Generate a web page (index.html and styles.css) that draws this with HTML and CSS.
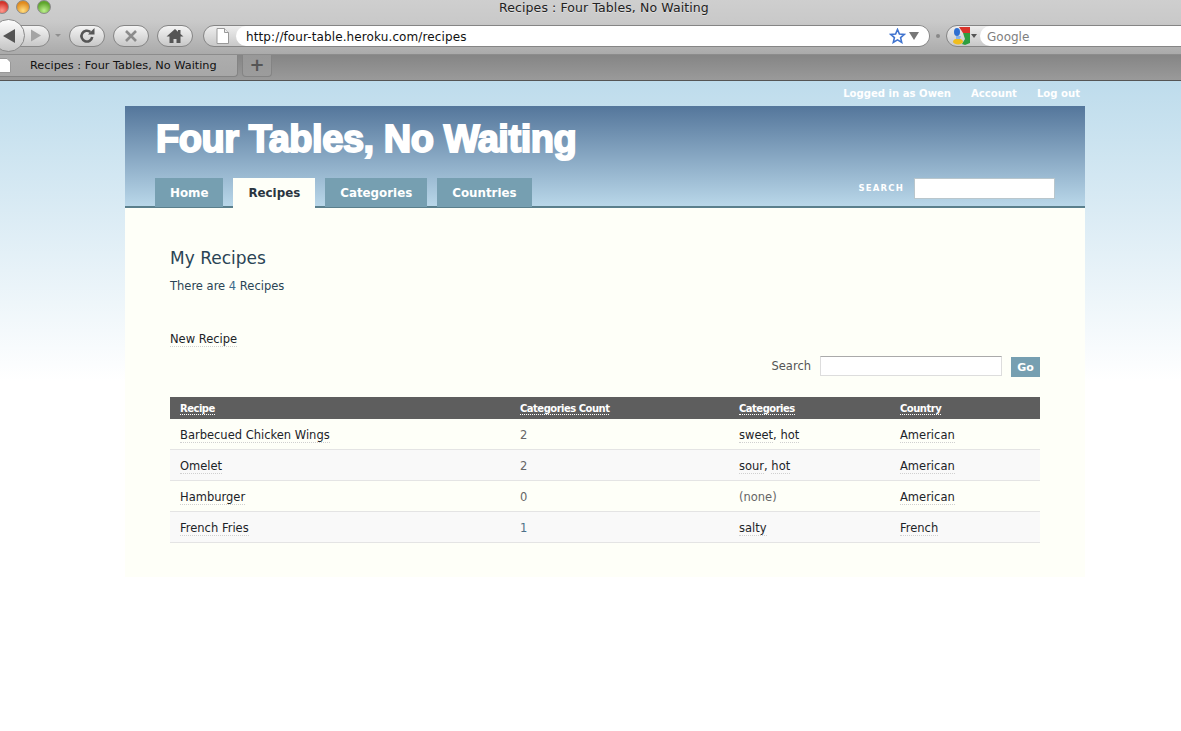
FILE: index.html
```html
<!DOCTYPE html>
<html lang="en">

<head>
  <meta charset="UTF-8">
  <title>Recipes : Four Tables, No Waiting</title>
  <link rel="stylesheet" href="styles.css">
</head>

<body>
  <div class="chrome">
    <div class="titlebar">
      <div class="lights">
        <span class="light red"></span>
        <span class="light amber"></span>
        <span class="light green"></span>
      </div>
      <div class="window-title">Recipes : Four Tables, No Waiting</div>
    </div>

    <div class="toolbar">
      <div class="history">
        <button class="back" type="button">
          <svg width="14" height="16" viewBox="0 0 14 16"><path d="M1 8 13 1v14z" fill="#555"/></svg>
        </button>
        <button class="forward" type="button">
          <svg width="11" height="13" viewBox="0 0 11 13"><path d="M11 6.500 1 .5v12z" fill="#a4a4a4"/></svg>
        </button>
      </div>
      <span class="small-arrow"></span>
      <button class="tool-btn" type="button">
        <svg width="18" height="18" viewBox="0 0 18 18"><path d="M14.200 10a5.400 5.400 0 1 1-1.800-5" fill="none" stroke="#555" stroke-width="2.600"/><path d="M10 7.500h6.500V1z" fill="#555"/></svg>
      </button>
      <button class="tool-btn" type="button">
        <svg width="14" height="14" viewBox="0 0 14 14"><path d="M2 2l10 10M12 2 2 12" stroke="#8b8b8b" stroke-width="2.600"/></svg>
      </button>
      <button class="tool-btn" type="button">
        <svg width="18" height="16" viewBox="0 0 18 16"><path d="M9 1 0.500 8.500H3.500V15h4v-4h3v4h4V8.500h3l-3-2.600V2h-2.500v1.800z" fill="#555"/></svg>
      </button>
      <div class="url-bar">
        <span class="url-icon">
          <svg width="13" height="16" viewBox="0 0 13 16"><path d="M1 .5h7.500L12.500 4.500V15.500H1z" fill="#fff" stroke="#999"/><path d="M8.500 .5v4h4" fill="#eee" stroke="#999"/></svg>
        </span>
        <div class="url-field">
          <span class="url-text">http://four-table.heroku.com/recipes</span>
          <svg class="star" width="17" height="16" viewBox="0 0 17 16"><path d="M8.500 1.500 10.400 6l4.900.4-3.700 3.200 1.100 4.800-4.200-2.500-4.200 2.500 1.100-4.800L1.700 6.400 6.600 6z" fill="#fff" stroke="#3f73cf" stroke-width="1.600"/></svg>
          <span class="url-arrow"></span>
        </div>
      </div>
      <span class="grip"></span>
      <div class="search-bar">
        <span class="engine">
          <svg width="17" height="18" viewBox="0 0 17 18"><path d="M6 0h11v6H10z" fill="#d9342b"/><path d="M10 6h7v10l-5 2-3-1 3-5z" fill="#2e9e3f"/><ellipse cx="4" cy="5" rx="3" ry="4" fill="#2f6fd0"/><ellipse cx="5" cy="14.500" rx="5" ry="3" fill="#f0bd1d"/><path d="M3 9h5l-1 3H3z" fill="#8ab4e8"/></svg>
          <span class="engine-arrow"></span>
        </span>
        <div class="search-field">Google</div>
      </div>
    </div>

    <div class="tabbar">
      <div class="tab">
        <svg width="12" height="15" viewBox="0 0 12 15"><path d="M0 .5h8L11.500 4v10.500H0z" fill="#fff" stroke="#999"/></svg>
        <span>Recipes : Four Tables, No Waiting</span>
      </div>
      <div class="new-tab">+</div>
    </div>
  </div>

  <div class="viewport">
    <div class="wrapper">
      <ul class="userbar">
        <li><a href="#">Logged in as Owen</a></li>
        <li><a href="#">Account</a></li>
        <li><a href="#">Log out</a></li>
      </ul>

      <div class="header">
        <h1>Four Tables, No Waiting</h1>
        <div class="header-row">
          <ul class="nav">
            <li><a href="#">Home</a></li>
            <li class="active"><a href="#">Recipes</a></li>
            <li><a href="#">Categories</a></li>
            <li><a href="#">Countries</a></li>
          </ul>
          <form class="site-search">
            <label for="site-q">SEARCH</label>
            <input type="text" id="site-q">
          </form>
        </div>
      </div>

      <div class="content">
        <h2>My Recipes</h2>
        <p class="count">There are <span class="number">4</span> Recipes</p>
        <p class="new-link"><a href="#">New Recipe</a></p>

        <form class="table-search">
          <label for="q">Search</label>
          <input type="text" id="q">
          <button type="button">Go</button>
        </form>

        <table class="recipes">
          <thead>
            <tr>
              <th class="col-name"><a href="#">Recipe</a></th>
              <th class="col-count"><a href="#">Categories Count</a></th>
              <th class="col-cats"><a href="#">Categories</a></th>
              <th><a href="#">Country</a></th>
            </tr>
          </thead>
          <tbody>
            <tr>
              <td><a href="#">Barbecued Chicken Wings</a></td>
              <td class="muted">2</td>
              <td><a href="#">sweet</a>, <a href="#">hot</a></td>
              <td><a href="#">American</a></td>
            </tr>
            <tr class="alt">
              <td><a href="#">Omelet</a></td>
              <td class="muted">2</td>
              <td><a href="#">sour</a>, <a href="#">hot</a></td>
              <td><a href="#">American</a></td>
            </tr>
            <tr>
              <td><a href="#">Hamburger</a></td>
              <td class="muted">0</td>
              <td class="muted">(none)</td>
              <td><a href="#">American</a></td>
            </tr>
            <tr class="alt">
              <td><a href="#">French Fries</a></td>
              <td class="blue">1</td>
              <td><a href="#">salty</a></td>
              <td><a href="#">French</a></td>
            </tr>
          </tbody>
        </table>
      </div>
    </div>
  </div>
</body>
</html>
```

FILE: styles.css
```css
/* Browser window */

html, body {
  margin: 0;
  height: 100%;
  overflow: hidden;
  background-color: #fff;
}

body {
  font-family: "DejaVu Sans", "Liberation Sans", sans-serif;
  font-size: 11.500px;
}

ul {
  margin: 0;
  padding: 0;
  list-style: none;
}

a {
  color: inherit;
  text-decoration: none;
}

.chrome {
  height: 81px;
  box-sizing: border-box;
  border-bottom: 1px solid #555;
  overflow: hidden;
}

.titlebar {
  display: flex;
  align-items: center;
  height: 22px;
  margin-top: -5px;
  padding-top: 5px;
  background: linear-gradient(#d0d0d0, #c9c9c9);
}

.lights {
  display: flex;
  gap: 7px;
  width: 604px;
  margin-left: -5px;
  margin-top: -9px;
}

.light {
  width: 14px;
  height: 14px;
  border-radius: 50%;
  border: 1px solid #8a8a8a;
  box-sizing: border-box;
}

.red { background: radial-gradient(circle at 50% 80%, #ff9a8e, #d3332b 70%); }
.amber { background: radial-gradient(circle at 50% 80%, #ffdf80, #e08a1e 70%); }
.green { background: radial-gradient(circle at 50% 80%, #bdf08e, #5ea52c 70%); }

.window-title {
  margin-left: -100px;
  margin-top: -7px;
  font-size: 12.500px;
  letter-spacing: 0.1px;
  color: #222;
  text-shadow: 0 1px 0 #e0e0e0;
}

.toolbar {
  display: flex;
  align-items: center;
  height: 33px;
  padding-bottom: 5px;
  box-sizing: border-box;
  border-bottom: 1px solid #8c8c8c;
  background: linear-gradient(#c9c9c9, #aaa);
}

.history {
  display: flex;
  align-items: center;
  flex: none;
  margin-left: -8px;
}

.back {
  position: relative;
  z-index: 1;
  display: flex;
  align-items: center;
  justify-content: center;
  width: 33px;
  height: 33px;
  padding: 0;
  border: 1px solid #8a8a8a;
  border-radius: 50%;
  background: linear-gradient(#fdfdfd, #c4c4c4);
}

.forward {
  display: flex;
  align-items: center;
  justify-content: flex-end;
  width: 36px;
  height: 22px;
  margin-left: -11px;
  padding: 0 8px 0 0;
  border: 1px solid #8a8a8a;
  border-radius: 0 11px 11px 0;
  background: linear-gradient(#f4f4f4, #c8c8c8);
}

.small-arrow {
  flex: none;
  width: 0;
  height: 0;
  margin: 0 8px 0 5px;
  border-left: 3px solid transparent;
  border-right: 3px solid transparent;
  border-top: 3px solid #8f8f8f;
}

.tool-btn {
  display: flex;
  align-items: center;
  justify-content: center;
  flex: none;
  width: 36px;
  height: 22px;
  margin-right: 8px;
  padding: 0;
  border: 1px solid #858585;
  border-radius: 11px;
  background: linear-gradient(#f4f4f4, #c8c8c8);
}

.url-bar {
  display: flex;
  align-items: center;
  flex: none;
  width: 727px;
  height: 22px;
  margin-left: 2px;
  box-sizing: border-box;
  border: 1px solid #858585;
  border-radius: 11px;
  background: linear-gradient(#eee, #c8c8c8);
}

.url-icon {
  display: flex;
  justify-content: flex-end;
  flex: none;
  width: 25px;
  height: 16px;
  padding-right: 7px;
}

.url-field {
  display: flex;
  align-items: center;
  flex: 1;
  height: 100%;
  padding-left: 10px;
  border-radius: 11px;
  background-color: #fff;
}

.url-text {
  flex: 1;
  padding-top: 2px;
  font-size: 12px;
  letter-spacing: 0.11px;
  color: #111;
}

.star {
  flex: none;
  margin-right: 3px;
}

.url-arrow {
  flex: none;
  width: 0;
  height: 0;
  margin-right: 10px;
  border-left: 5px solid transparent;
  border-right: 5px solid transparent;
  border-top: 8px solid #777;
}

.grip {
  flex: none;
  width: 4px;
  height: 4px;
  margin: 0 6px;
  border-radius: 50%;
  background-color: #888;
}

.search-bar {
  display: flex;
  align-items: center;
  flex: none;
  width: 300px;
  height: 22px;
  box-sizing: border-box;
  border: 1px solid #858585;
  border-radius: 11px;
  background: linear-gradient(#eee, #c8c8c8);
}

.engine {
  display: flex;
  align-items: center;
  flex: none;
  width: 33px;
  padding-left: 6px;
  box-sizing: border-box;
}

.engine-arrow {
  width: 0;
  height: 0;
  margin-left: 1px;
  border-left: 3px solid transparent;
  border-right: 3px solid transparent;
  border-top: 4px solid #555;
}

.search-field {
  flex: 1;
  height: 100%;
  padding-left: 7px;
  border-radius: 11px;
  font-size: 12px;
  line-height: 22px;
  color: #808080;
  background-color: #fff;
}

.tabbar {
  display: flex;
  gap: 4px;
  height: 25px;
  background: linear-gradient(#858585, #9a9a9a);
}

.tab {
  display: flex;
  align-items: center;
  gap: 19px;
  width: 238px;
  height: 22px;
  box-sizing: border-box;
  border-bottom: 1px solid #848484;
  border-right: 1px solid #848484;
  border-radius: 0 0 4px 0;
  font-size: 11.300px;
  color: #111;
  background: linear-gradient(#adadad, #a7a7a7);
}

.tab svg {
  flex: none;
  margin-left: -1px;
}

.new-tab {
  width: 30px;
  height: 22px;
  box-sizing: border-box;
  border: 1px solid #848484;
  border-top: none;
  border-radius: 0 0 4px 4px;
  font-size: 18px;
  font-weight: bold;
  line-height: 19px;
  text-align: center;
  color: #555;
  background: linear-gradient(#989898, #9c9c9c);
}

/* Page */

.viewport {
  height: 650px;
  background: linear-gradient(#bedcec, #fff 300px);
}

.wrapper {
  width: 960px;
  margin-left: 125px;
}

.userbar {
  display: flex;
  justify-content: flex-end;
  gap: 20px;
  height: 25px;
  padding-right: 5px;
  font-size: 10.100px;
  font-weight: bold;
  line-height: 25px;
  color: #fff;
}

.header {
  height: 102px;
  box-sizing: border-box;
  background: linear-gradient(#54769b, #b9d7e9);
  border-bottom: 2px solid #5a7f8c;
}

.header h1 {
  margin: 0;
  padding: 11px 0 0 31px;
  height: 61px;
  box-sizing: border-box;
  font-family: "Liberation Sans", Arial, sans-serif;
  font-size: 38px;
  font-weight: bold;
  line-height: 44px;
  letter-spacing: -0.45px;
  color: #fff;
  -webkit-text-stroke: 1.900px #fff;
}

.header-row {
  display: flex;
  justify-content: space-between;
  padding: 0 30px;
}

.nav {
  display: flex;
  gap: 10px;
  margin-top: 11px;
}

.nav a {
  display: block;
  height: 29px;
  padding: 0 15px;
  font-size: 11.850px;
  font-weight: bold;
  line-height: 30px;
  color: #fff;
  background-color: #769fb1;
}

.nav .active a {
  height: 30px;
  color: #2a3540;
  background-color: #fefff8;
}

.site-search {
  display: flex;
  align-items: flex-start;
  gap: 10px;
  margin-top: 11px;
}

.site-search label {
  font-size: 8.500px;
  font-weight: bold;
  line-height: 21px;
  letter-spacing: 1.200px;
  color: #fff;
}

.site-search input {
  width: 141px;
  height: 21px;
  padding: 0;
  box-sizing: border-box;
  border: 1px solid #b9c6cc;
  background-color: #fff;
}

.content {
  height: 369px;
  padding: 0 45px;
  box-sizing: border-box;
  overflow: hidden;
  background-color: #fefff8;
}

.content h2 {
  margin: 38px 0 0;
  font-size: 17px;
  font-weight: normal;
  line-height: 24px;
  color: #2a4455;
}

.count {
  margin: 7px 0 0;
  line-height: 18px;
  color: #2a4455;
}

.number {
  color: #3c6a8a;
}

.new-link {
  margin: 35px 0 0;
  line-height: 18px;
  color: #1c2328;
}

.new-link a,
.recipes td a {
  border-bottom: 1px dotted #d0d0d0;
}

.table-search {
  display: flex;
  justify-content: flex-end;
  align-items: flex-start;
  height: 21px;
  margin-top: 8px;
  color: #555;
}

.table-search label {
  margin-right: 9px;
  line-height: 21px;
}

.table-search input {
  width: 182px;
  height: 20px;
  margin-right: 9px;
  padding: 0;
  box-sizing: border-box;
  border: 1px solid #ddd;
  border-top-color: #aaa;
  background-color: #fff;
}

.table-search button {
  width: 29px;
  height: 20px;
  margin-top: 1px;
  padding: 0;
  border: none;
  font-family: inherit;
  font-size: 11px;
  font-weight: bold;
  color: #fff;
  background-color: #769fb1;
}

.recipes {
  width: 870px;
  margin-top: 20px;
  border-collapse: separate;
  border-spacing: 0;
  table-layout: fixed;
}

.recipes th {
  height: 22px;
  padding: 0 10px;
  font-size: 10px;
  letter-spacing: -0.5px;
  text-align: left;
  color: #fff;
  background-color: #5e5e5e;
}

.recipes th a {
  border-bottom: 1px dotted #fff;
}

.col-name { width: 320px; }
.col-count { width: 199px; }
.col-cats { width: 141px; }

.recipes td {
  height: 31px;
  padding: 1px 10px 0;
  box-sizing: border-box;
  border-bottom: 1px solid #e4e4e4;
  color: #1c2328;
}

.recipes .alt td {
  background-color: #f9f9f9;
}

.recipes td.muted {
  color: #666;
}

.recipes td.blue {
  color: #4d7088;
}
```
